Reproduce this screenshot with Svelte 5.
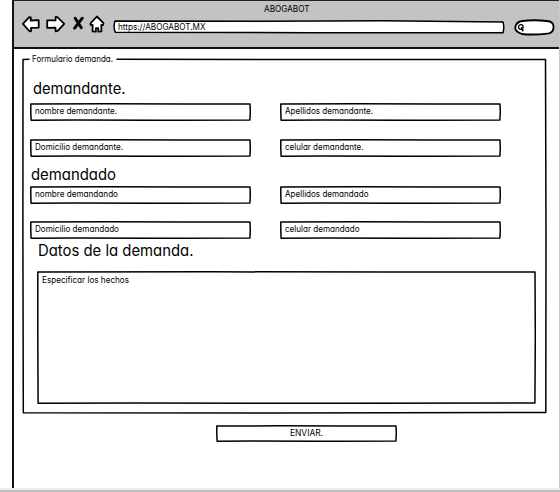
<script>
  const sections = [
    {
      title: 'demandante.', x: 10.5, w: 92.5, top: 17, height: 24, gap: 18,
      rows: [
        [{ t: 'nombre demandante.', w: 82 }, { t: 'Apellidos demandante.', w: 88 }],
        [{ t: 'Domicilio demandante.', w: 88 }, { t: 'celular demandante.', w: 78.5 }]
      ]
    },
    {
      title: 'demandado', x: 8.5, w: 85, top: 8, height: 21, gap: 17,
      rows: [
        [{ t: 'nombre demandando', w: 83 }, { t: 'Apellidos demandado', w: 83.5 }],
        [{ t: 'Domicilio demandado', w: 84 }, { t: 'celular demandado', w: 74.5 }]
      ]
    }
  ];
</script>

{#snippet label(t, w, size = 8.7)}
  <svg class="label" width={w} height={size} aria-label={t}>
    <text x="0" y={size > 10 ? 15 : 8} font-size={size} textLength={w} lengthAdjust="spacingAndGlyphs">{t}</text>
  </svg>
{/snippet}

{#snippet sketch(w, h)}
  <svg class="sketch" width={w} height={h} viewBox="0 0 {w} {h}" aria-hidden="true">
    <path d="M.8 1.1L{w * 0.35} .8L{w * 0.7} 1.1L{w - 1} 1L{w - 0.7} {h * 0.5}L{w - 1.1} {h - 1}L{w * 0.6} {h - 0.7}L{w * 0.2} {h - 1}L1.1 {h - 0.8}L.8 {h * 0.5}Z" />
  </svg>
{/snippet}

<div class="page">
  <main class="window">
    <header>
      <div class="title">{@render label('ABOGABOT', 45.5)}</div>
      <nav>
        <svg class="tools" width="92" height="22" viewBox="0 0 92 22">
          <path d="M1.9 10.8L8.2 4.2L9.8 4.4L9.6 7.5L17.7 7.2V14.6L10 14.9L10.1 18.3L8.3 18Z" />
          <path d="M26.2 7.3L34.5 7.4L34.7 4L36.4 4.2L43.2 10.8L36.7 17.9L34.6 18.3L34.5 14.7L26.2 14.9Z" />
          <path class="cross" d="M54.2 5.2L60.3 14.8M61.3 5.2L53.6 15.2" />
          <path d="M75.9 3.5L82.5 10.2L82 12L80.3 11.8L80.4 18.4L77.3 18.6V15.2H74.9V18.6L71.6 18.4V12L69.5 11.9L69.7 10.2Z" />
        </svg>
        <div class="address">
          <svg class="sketch" width="392" height="14"><path d="M2 1L150 1.3L270 .8L390 2Q391.6 7 390 12.7L200 12.7L2.3 12.2Q0 7 2 1Z" /></svg>
          {@render label('https://ABOGABOT.MX', 87.5)}
        </div>
        <svg class="search" width="41" height="17" viewBox="0 0 41 17">
          <path d="M8 2Q20 .5 33 2Q39 2.6 39.5 7Q40 13 35 14.3Q20 16.3 8 15Q1.2 13 1.2 8.5Q2 3 8 2Z" />
          <circle cx="6.8" cy="8" r="2.3" /><path d="M7.6 9L8.8 11.5" />
        </svg>
      </nav>
    </header>

    <section class="form">
      <svg class="sketch" width="525" height="356"><path d="M7 1.2L1 1.4L.9 180L1.3 354.7L260 355L523.8 354.5L524 180L523.5 1.5L300 1.6L95 1.2" /></svg>
      <div class="legend">{@render label('Formulario demanda.', 81)}</div>
      {#each sections as s}
        <h2 style="margin-top:{s.top}px;height:{s.height}px;padding-left:{s.x}px">{@render label(s.title, s.w, 15.3)}</h2>
        <div class="rows" style="gap:{s.gap}px">
          {#each s.rows as row}
            <div class="row">
              {#each row as f}
                <div class="field">{@render sketch(221, 18)}{@render label(f.t, f.w)}</div>
              {/each}
            </div>
          {/each}
        </div>
      {/each}
      <h2 class="facts">{@render label('Datos de la demanda.', 155.5, 15.3)}</h2>
      <div class="area">{@render sketch(499, 133)}{@render label('Especificar los hechos', 87)}</div>
    </section>
    <div class="send">{@render sketch(181, 17)}{@render label('ENVIAR.', 33)}</div>
  </main>
  <footer></footer>
</div>

<style>
  :global(body) { margin: 0; background: #fff; }
  .page { width: 560px; height: 492px; overflow: hidden; box-sizing: border-box; }
  .window { height: 488px; margin-left: 12px; border-left: 2px solid #111; border-right: 1px solid #c8c8c8; box-sizing: border-box; }
  footer { height: 2px; background: #eee; border-bottom: 2px solid #c0c0c0; }
  header { height: 49px; box-sizing: border-box; background: #c3c3c3; border-top: 1px solid #222; border-bottom: 2px solid #111; }
  svg { display: block; fill: #fff; stroke: #000; stroke-width: 1.5; stroke-linejoin: round; stroke-linecap: round; flex: none; }
  .label { overflow: visible; stroke: none; fill: #000; position: relative; }
  text { font-family: Inter, "Open Sans", sans-serif; font-feature-settings: "cv11", "ss03"; }
  .sketch { position: absolute; left: 0; top: 0; }
  .title { height: 17px; padding: 2.5px 0 0 249.5px; box-sizing: border-box; }
  nav { display: flex; align-items: flex-start; margin-top: -5px; padding-left: 7px; }
  .tools, .search { stroke-width: 1.8; }
  .tools .cross { stroke-width: 2.9; }
  .address { position: relative; width: 392px; height: 14px; margin-top: 7px; padding: 2px 0 0 4.5px; box-sizing: border-box; }
  .search { margin: 6px 0 0 9px; }
  .search circle { stroke-width: 1.3; }
  .form { position: relative; width: 525px; height: 356px; margin: 9px 0 0 8px; display: flex; flex-direction: column; }
  .legend { height: 4px; padding-left: 10px; }
  .legend .label { top: -4px; }
  h2 { margin: 0; box-sizing: border-box; font-weight: 400; }
  .rows { display: flex; flex-direction: column; padding-left: 8px; }
  .row { display: flex; gap: 29px; }
  .field { position: relative; width: 221px; height: 18px; padding: 3px 0 0 5px; box-sizing: border-box; }
  .facts { padding-left: 15.5px; margin-top: 2px; height: 30px; }
  .area { position: relative; width: 499px; height: 133px; margin-left: 15px; padding: 4px 0 0 5px; box-sizing: border-box; }
  .send { position: relative; width: 181px; height: 17px; margin: 11px 0 0 202px; padding: 3px 0 0 73.5px; box-sizing: border-box; }
</style>
